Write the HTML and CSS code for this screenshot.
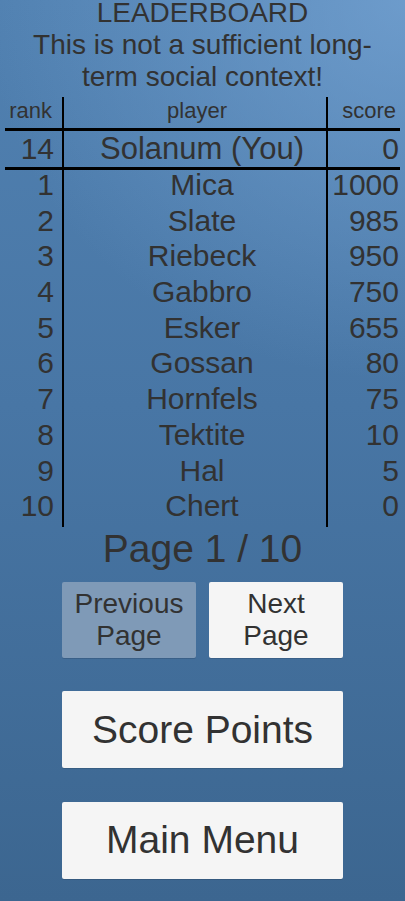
FILE: index.html
```html
<!DOCTYPE html>
<html lang="en">
<head>
<meta charset="utf-8">
<title>Leaderboard</title>
<link rel="stylesheet" href="styles.css">
</head>
<body>
<main class="screen">
  <header class="title">
    <div class="title-main">LEADERBOARD</div>
    <div class="title-sub">This is not a sufficient long-<br>term social context!</div>
  </header>

  <section class="board">
    <div class="cell rank head">rank</div>
    <div class="cell player head">player</div>
    <div class="cell score head">score</div>
    <div class="hline"></div>

    <div class="cell rank you">14</div>
    <div class="cell player you">Solanum (You)</div>
    <div class="cell score you">0</div>
    <div class="hline"></div>

    <div class="cell rank">1</div><div class="cell player">Mica</div><div class="cell score">1000</div>
    <div class="cell rank">2</div><div class="cell player">Slate</div><div class="cell score">985</div>
    <div class="cell rank">3</div><div class="cell player">Riebeck</div><div class="cell score">950</div>
    <div class="cell rank">4</div><div class="cell player">Gabbro</div><div class="cell score">750</div>
    <div class="cell rank">5</div><div class="cell player">Esker</div><div class="cell score">655</div>
    <div class="cell rank">6</div><div class="cell player">Gossan</div><div class="cell score">80</div>
    <div class="cell rank">7</div><div class="cell player">Hornfels</div><div class="cell score">75</div>
    <div class="cell rank">8</div><div class="cell player">Tektite</div><div class="cell score">10</div>
    <div class="cell rank">9</div><div class="cell player">Hal</div><div class="cell score">5</div>
    <div class="cell rank">10</div><div class="cell player">Chert</div><div class="cell score">0</div>
  </section>

  <div class="pager">Page 1 / 10</div>

  <div class="actions">
    <div class="pair">
      <button class="btn small disabled">Previous<br>Page</button>
      <button class="btn small">Next<br>Page</button>
    </div>
    <button class="btn big">Score Points</button>
    <button class="btn big">Main Menu</button>
  </div>
</main>
</body>
</html>
```

FILE: styles.css
```css
* { box-sizing: border-box; }

html, body {
  margin: 0;
  padding: 0;
}

body {
  width: 405px;
  height: 901px;
  overflow: hidden;
  font-family: "Liberation Sans", Arial, sans-serif;
  color: #323232;
  background:
    radial-gradient(ellipse 420px 380px at 100% 0%, rgba(118, 164, 212, 0.75), rgba(118, 164, 212, 0) 100%),
    linear-gradient(to bottom, #5181b1 0%, #4876a5 45%, #3c6690 100%);
}

.screen {
  display: flex;
  flex-direction: column;
  align-items: center;
}

.title {
  width: 100%;
  text-align: center;
  font-size: 28px;
}

.title-main {
  line-height: 26px;
  margin-bottom: 3px;
}

.title-sub {
  line-height: 32px;
}

.board {
  margin-top: 4px;
  width: 395px;
  display: grid;
  grid-template-columns: 57px 266px 72px;
  grid-template-rows: 31px 3px 36px 3px;
  grid-auto-rows: 35.7px;
}

.cell {
  font-size: 30px;
  line-height: 30px;
  white-space: nowrap;
}

.rank {
  text-align: right;
  padding-right: 8px;
}

.player {
  text-align: center;
  padding-left: 14px;
  border-left: 2px solid #000;
  border-right: 2px solid #000;
}

.score {
  text-align: right;
  padding-right: 1px;
}

.head {
  font-size: 22px;
  line-height: 27px;
}

.rank.head { padding-right: 10px; }
.player.head { padding-left: 4px; }
.score.head { padding-right: 4px; }

.you {
  line-height: 36px;
}

.player.you {
  font-size: 31px;
}

.hline {
  grid-column: 1 / -1;
  background: #000;
}

.pager {
  font-size: 39px;
  line-height: 44px;
  text-align: center;
}

.actions {
  margin-top: 11px;
  width: 281px;
  display: flex;
  flex-direction: column;
  gap: 33.5px;
}

.pair {
  display: flex;
  gap: 13px;
}

.btn {
  font-family: "Liberation Sans", Arial, sans-serif;
  color: #323232;
  background: #f5f5f5;
  border: none;
  border-radius: 2px;
  padding: 0;
  margin: 0;
  box-shadow: 0 1px 0 rgba(0, 0, 0, 0.12);
}

.btn.small {
  flex: 1;
  height: 76px;
  font-size: 28px;
  line-height: 32px;
}

.btn.disabled {
  background: #7f9ab7;
}

.btn.big {
  width: 100%;
  height: 77px;
  font-size: 39px;
}
```
